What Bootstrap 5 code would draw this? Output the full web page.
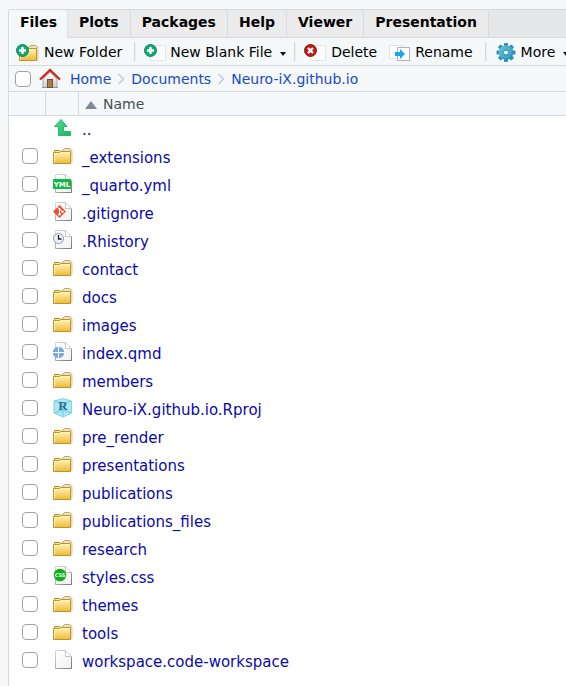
<!DOCTYPE html>
<html lang="en">
<head>
<meta charset="utf-8">
<meta name="viewport" content="width=device-width, initial-scale=1">
<title>Files</title>
<link href="https://cdn.jsdelivr.net/npm/bootstrap@5.3.0/dist/css/bootstrap.min.css" rel="stylesheet">
<style>
  :root { --line: #d6dadc; --pane: #f4f8f9; }
  body { background: #f6f7f9; font-family: "DejaVu Sans", sans-serif; font-size: 14px; line-height: 20px; color: #000; padding-top: 9px; overflow-x: hidden; }
  .pane { border: 1px solid var(--line); border-right: 0; border-bottom: 0; border-top-left-radius: 4px; background: #fff; min-height: calc(100vh - 9px); }
  .pane-tabs { background: #e6e7e8; border-top-left-radius: 3px; border: 0; }
  .pane-tabs .nav-item { margin: 0; }
  .pane-tabs .nav-link { margin: 0; padding: 2px 11px 5px; border: 0; border-right: 1px solid var(--line); border-bottom: 1px solid var(--line); border-radius: 0 4px 0 0; background: #ebebec; color: #000; font-weight: bold; line-height: 21px; height: 28px; }
  .pane-tabs .nav-link.active { padding-right: 10px; background: var(--pane); border-bottom-color: var(--pane); color: #000; border-radius: 3px 4px 0 0; }
  .pane-tabs .filler { border-bottom: 1px solid var(--line); }
  .bar { background: var(--pane); border-bottom: 1px solid var(--line); white-space: nowrap; overflow: hidden; }
  .tools { height: 28px; padding-left: 7px; }
  .crumbs { height: 26px; padding-left: 6px; }
  .tool { border: 0; background: none; padding: 0; color: #000; display: flex; align-items: center; flex-shrink: 0; }
  .tool svg, .crumbs svg { flex-shrink: 0; }
  .tool .tri { border: 3px solid transparent; border-top: 4px solid #111; border-bottom: 0; margin: 5px 0 0 8px; }
  .rule { width: 2px; height: 19px; margin: 0 8px 0 12px; background: #d3d7da; border-right: 1px solid #eceff0; flex-shrink: 0; }
  .tri-rule { margin-left: 8px; }
  .tool-next { margin-left: 12px; }
  .crumbs a { color: #1c49c4; text-decoration: none; }
  .crumbs .sep { margin: 0 7px; }
  .crumbs .house { margin: 0 9px 0 8px; }
  .tick { appearance: none; display: block; width: 16px; height: 16px; margin: 0; border: 1px solid #a2a2a2; border-radius: 4px; background: #fff; flex-shrink: 0; }
  .tick:checked { background: #3a7bd5; }
  .files { table-layout: fixed; width: 100%; border-collapse: separate; border-spacing: 0; }
  .files .c-tick { width: 37px; }
  .files .c-icon { width: 33px; }
  .files th { height: 24px; padding: 0; background: var(--pane); border-bottom: 1px solid var(--line); border-right: 1px solid var(--line); font-weight: normal; color: #494f56; line-height: 22px; }
  .files th:last-child { border-right: 0; padding-left: 6px; }
  .files th svg { margin-right: 6px; }
  .files td { height: 28px; padding: 0; font-size: 15px; line-height: 28px; vertical-align: top; }
  .files td:nth-child(1) { padding: 4px 0 0 13px; }
  .files td:nth-child(2) { padding: 2px 0 0 7px; }
  .files td:nth-child(3) { padding-left: 3px; }
  .files td svg { display: block; }
  .files td a { color: #0a0aa8; text-decoration: none; }
  .files a:hover, .crumbs a:hover { text-decoration: underline; }
</style>
<script src="https://cdn.jsdelivr.net/npm/bootstrap@5.3.0/dist/js/bootstrap.bundle.min.js"></script>
</head>
<body>
<svg width="0" height="0" class="position-absolute" aria-hidden="true">
  <defs>
    <linearGradient id="gold" x1="0" y1="0" x2="0" y2="1"><stop offset="0" stop-color="#fff5b5"/><stop offset=".5" stop-color="#f5d873"/><stop offset="1" stop-color="#efb93c"/></linearGradient>
    <linearGradient id="green" x1="0" y1="0" x2="1" y2="1"><stop offset="0" stop-color="#54dc95"/><stop offset="1" stop-color="#16b861"/></linearGradient>
    <linearGradient id="sheet" x1="0" y1="0" x2="1" y2="1"><stop offset="0" stop-color="#fff"/><stop offset="1" stop-color="#f1f1f1"/></linearGradient>
    <linearGradient id="edge" x1="0" y1="0" x2="1" y2="1"><stop offset="0" stop-color="#ddd"/><stop offset="1" stop-color="#777"/></linearGradient>
    <linearGradient id="blue" x1="0" y1="0" x2="1" y2="1"><stop offset="0" stop-color="#6ac9e6"/><stop offset="1" stop-color="#1e86ad"/></linearGradient>
    <linearGradient id="wall" x1="0" y1="0" x2="0" y2="1"><stop offset="0" stop-color="#fff"/><stop offset="1" stop-color="#c9cdd4"/></linearGradient>
  </defs>
  <symbol id="i-folder" viewBox="0 0 20 20">
    <path d="M9 5.500L11 2.500H17L19 4.500V16.500L17 17.500H9Z" fill="#e4e2dc" stroke="#dfcf98"/>
    <path d="M9 5L11.500 2.500H16.500L18.500 4.500" fill="none" stroke="#cdab43"/>
    <path d="M1.500 7V4.500H7L8.500 6.500H17.500" fill="#f6e6a0" stroke="#b9921d"/>
    <path d="M.5 6.500H6.500L8 5.500H17.500V17.500H.5Z" fill="url(#gold)" stroke="#bd942a"/>
    <path d="M1.500 16.500V7.500H7L8.500 6.500H16.500" fill="none" stroke="#fff5bd"/>
  </symbol>
  <symbol id="i-page" viewBox="0 0 20 20">
    <path d="M2.500 .5H12.500L18.500 6.500V18.500H2.500Z" fill="url(#sheet)" stroke="url(#edge)"/>
    <path d="M12.500 .5V6.500H18.500" fill="#fff" stroke="#c6c6c6"/>
  </symbol>
  <symbol id="i-up" viewBox="0 0 20 20">
    <path d="M8 1.500L14 8.500H10.500V13.500H17.500V17.500H5.500V8.500H1.500Z" fill="url(#green)" stroke="#27b96c"/>
  </symbol>
  <symbol id="i-git" viewBox="0 0 20 20">
    <use href="#i-page"/><path d="M6.500 3L13 9.500L6.500 16L0 9.500Z" fill="#f05133"/>
    <path d="M4.500 5L6.500 7V12M6.500 7L9.500 9.800" stroke="#fff" stroke-width="1" fill="none"/><circle cx="6.500" cy="7" r="1.100" fill="#fff"/><circle cx="6.500" cy="12.300" r="1.300" fill="#fff"/><circle cx="9.500" cy="9.700" r="1.200" fill="#fff"/>
  </symbol>
  <symbol id="i-clock" viewBox="0 0 20 20">
    <use href="#i-page"/><circle cx="5.500" cy="8.500" r="5" fill="#edf2fa" stroke="#8d97a8"/><path d="M5.500 5V9H8.500" fill="none" stroke="#222" stroke-width="1.300"/>
  </symbol>
  <symbol id="i-quarto" viewBox="0 0 20 20">
    <use href="#i-page"/><circle cx="5.500" cy="10.500" r="5.700" fill="#75aadb"/><path d="M5.500 4V17M-1 10.500H12" stroke="#fff"/>
  </symbol>
  <symbol id="i-plus" viewBox="0 0 14 14">
    <circle cx="6.500" cy="6.500" r="6" fill="#12a873" stroke="#0a8b60"/><path d="M6.500 3V10M3 6.500H10" stroke="#fff" stroke-width="2.400"/>
  </symbol>
</svg>

<main class="pane ms-2">
  <ul class="nav nav-tabs pane-tabs flex-nowrap" role="tablist">
    <li class="nav-item" role="presentation"><button class="nav-link active" type="button" role="tab" aria-selected="true">Files</button></li>
    <li class="nav-item" role="presentation"><button class="nav-link" type="button" role="tab">Plots</button></li>
    <li class="nav-item" role="presentation"><button class="nav-link" type="button" role="tab">Packages</button></li>
    <li class="nav-item" role="presentation"><button class="nav-link" type="button" role="tab">Help</button></li>
    <li class="nav-item" role="presentation"><button class="nav-link" type="button" role="tab">Viewer</button></li>
    <li class="nav-item" role="presentation"><button class="nav-link" type="button" role="tab">Presentation</button></li>
    <li class="filler flex-grow-1" role="presentation"></li>
  </ul>

  <div class="bar tools d-flex align-items-center" role="toolbar" aria-label="File actions">
    <button class="tool" type="button"><svg class="me-1" width="24" height="20" viewBox="0 0 24 20" aria-hidden="true"><use href="#i-folder" x="3" y="1" width="20" height="20"/><use href="#i-plus" x="0" y="2" width="14" height="14"/></svg>New Folder</button>
    <span class="rule"></span>
    <button class="tool" type="button"><svg class="me-1" width="22" height="20" viewBox="0 0 22 20" aria-hidden="true"><rect x="6.500" y="3.500" width="15" height="15" fill="#fff" stroke="#e3e5e6"/><use href="#i-plus" x="0" y="2" width="14" height="14"/></svg>New Blank File<span class="tri"></span></button>
    <span class="rule tri-rule"></span>
    <button class="tool" type="button"><svg class="me-1" width="23" height="20" viewBox="0 0 23 20" aria-hidden="true"><rect x="6.500" y="3.500" width="15" height="15" fill="#fff" stroke="#e3e5e6"/><circle cx="6.500" cy="8.500" r="6" fill="#b81f1a" stroke="#991611"/><path d="M4 6L9 11M9 6L4 11" stroke="#fff" stroke-width="2.200"/></svg>Delete</button>
    <button class="tool tool-next" type="button"><svg class="me-1" width="22" height="20" viewBox="0 0 22 20" aria-hidden="true"><rect x=".5" y="3.500" width="13" height="13" fill="#fff" stroke="#e0e2e4"/><rect x="8.500" y="5.500" width="12" height="13" fill="#fff" stroke="#aeb4bb"/><path d="M6 10H11V7L16 12L11 17V14H6Z" fill="#12a9ee"/></svg>Rename</button>
    <span class="rule"></span>
    <button class="tool" type="button"><svg class="me-1" width="22" height="20" viewBox="0 0 22 20" aria-hidden="true"><g transform="translate(11 10.500)"><g fill="#2c8fb4"><g id="teeth"><rect x="-2" y="-9.500" width="4" height="19" rx="1"/><rect x="-9.500" y="-2" width="19" height="4" rx="1"/></g><use href="#teeth" transform="rotate(45)"/></g><circle r="7.300" fill="url(#blue)"/><circle r="4.500" fill="none" stroke="#58b8d6"/><circle r="2.500" fill="#f4f8f9" stroke="#3389a8"/></g></svg>More<span class="tri"></span></button>
  </div>

  <nav class="bar crumbs d-flex align-items-center" aria-label="Current folder">
    <input class="tick" type="checkbox" aria-label="Select all">
    <svg class="house" width="22" height="22" viewBox="0 0 22 22" aria-hidden="true"><path d="M4 11L11 4L18 11V19.500H4Z" fill="url(#wall)" stroke="#a5abb4"/><path d="M3 19.500H19" stroke="#8f959e"/><rect x="8.500" y="11.500" width="5" height="8" fill="#ad7b4c" stroke="#76512e"/><path d="M1 11.500L11 2L21 11.500" fill="none" stroke="#c82410" stroke-width="2.200"/></svg>
    <a href="#">Home</a>
    <svg class="sep" width="6" height="12" viewBox="0 0 6 12" aria-hidden="true"><path d="M.5 1L5.500 6L.5 11" fill="none" stroke="#bfc6cd" stroke-width="1.300"/></svg>
    <a href="#">Documents</a>
    <svg class="sep" width="6" height="12" viewBox="0 0 6 12" aria-hidden="true"><path d="M.5 1L5.500 6L.5 11" fill="none" stroke="#bfc6cd" stroke-width="1.300"/></svg>
    <a href="#">Neuro-iX.github.io</a>
  </nav>

  <table class="files">
    <colgroup><col class="c-tick"><col class="c-icon"><col></colgroup>
    <thead><tr><th></th><th></th><th scope="col"><svg width="12" height="8" viewBox="0 0 12 8" aria-hidden="true"><path d="M6 0L12 8H0Z" fill="#7e8a9a"/></svg>Name</th></tr></thead>
    <tbody>
      <tr><td></td><td><svg width="20" height="20"><use href="#i-up"/></svg></td><td><a href="#">..</a></td></tr>
      <tr><td><input class="tick" type="checkbox" aria-labelledby="f1"></td><td><svg width="20" height="20"><use href="#i-folder"/></svg></td><td><a id="f1" href="#">_extensions</a></td></tr>
      <tr><td><input class="tick" type="checkbox" aria-labelledby="f2"></td><td><svg width="20" height="20" viewBox="0 0 20 20"><use href="#i-page"/><rect x="0" y="5" width="18" height="10" rx="1" fill="#10b944"/><text x="9" y="13" text-anchor="middle" font-family="DejaVu Sans, sans-serif" font-size="7" font-weight="bold" fill="#fff">YML</text></svg></td><td><a id="f2" href="#">_quarto.yml</a></td></tr>
      <tr><td><input class="tick" type="checkbox" aria-labelledby="f3"></td><td><svg width="20" height="20"><use href="#i-git"/></svg></td><td><a id="f3" href="#">.gitignore</a></td></tr>
      <tr><td><input class="tick" type="checkbox" aria-labelledby="f4"></td><td><svg width="20" height="20"><use href="#i-clock"/></svg></td><td><a id="f4" href="#">.Rhistory</a></td></tr>
      <tr><td><input class="tick" type="checkbox" aria-labelledby="f5"></td><td><svg width="20" height="20"><use href="#i-folder"/></svg></td><td><a id="f5" href="#">contact</a></td></tr>
      <tr><td><input class="tick" type="checkbox" aria-labelledby="f6"></td><td><svg width="20" height="20"><use href="#i-folder"/></svg></td><td><a id="f6" href="#">docs</a></td></tr>
      <tr><td><input class="tick" type="checkbox" aria-labelledby="f7"></td><td><svg width="20" height="20"><use href="#i-folder"/></svg></td><td><a id="f7" href="#">images</a></td></tr>
      <tr><td><input class="tick" type="checkbox" aria-labelledby="f8"></td><td><svg width="20" height="20"><use href="#i-quarto"/></svg></td><td><a id="f8" href="#">index.qmd</a></td></tr>
      <tr><td><input class="tick" type="checkbox" aria-labelledby="f9"></td><td><svg width="20" height="20"><use href="#i-folder"/></svg></td><td><a id="f9" href="#">members</a></td></tr>
      <tr><td><input class="tick" type="checkbox" aria-labelledby="f10"></td><td><svg width="20" height="20" viewBox="0 0 20 20"><path d="M1 3L10 .5L18.500 3V15L10 19L1 15Z" fill="#aee6f4"/><path d="M1 3L10 5L18.500 3M10 5V19M1 15L10 12L18.500 15" fill="none" stroke="#6fcbe2"/><path d="M1 3L10 .5L18.500 3V15L10 19L1 15Z" fill="none" stroke="#80d4e8"/><text x="10" y="12" text-anchor="middle" font-family="Liberation Serif, serif" font-size="13" font-weight="bold" fill="#2b6c8c">R</text></svg></td><td><a id="f10" href="#">Neuro-iX.github.io.Rproj</a></td></tr>
      <tr><td><input class="tick" type="checkbox" aria-labelledby="f11"></td><td><svg width="20" height="20"><use href="#i-folder"/></svg></td><td><a id="f11" href="#">pre_render</a></td></tr>
      <tr><td><input class="tick" type="checkbox" aria-labelledby="f12"></td><td><svg width="20" height="20"><use href="#i-folder"/></svg></td><td><a id="f12" href="#">presentations</a></td></tr>
      <tr><td><input class="tick" type="checkbox" aria-labelledby="f13"></td><td><svg width="20" height="20"><use href="#i-folder"/></svg></td><td><a id="f13" href="#">publications</a></td></tr>
      <tr><td><input class="tick" type="checkbox" aria-labelledby="f14"></td><td><svg width="20" height="20"><use href="#i-folder"/></svg></td><td><a id="f14" href="#">publications_files</a></td></tr>
      <tr><td><input class="tick" type="checkbox" aria-labelledby="f15"></td><td><svg width="20" height="20"><use href="#i-folder"/></svg></td><td><a id="f15" href="#">research</a></td></tr>
      <tr><td><input class="tick" type="checkbox" aria-labelledby="f16"></td><td><svg width="20" height="20" viewBox="0 0 20 20"><use href="#i-page"/><circle cx="7" cy="9" r="6.300" fill="#0fb01c"/><text x="7" y="11" text-anchor="middle" font-family="DejaVu Sans, sans-serif" font-size="5" font-weight="bold" fill="#fff">CSS</text></svg></td><td><a id="f16" href="#">styles.css</a></td></tr>
      <tr><td><input class="tick" type="checkbox" aria-labelledby="f17"></td><td><svg width="20" height="20"><use href="#i-folder"/></svg></td><td><a id="f17" href="#">themes</a></td></tr>
      <tr><td><input class="tick" type="checkbox" aria-labelledby="f18"></td><td><svg width="20" height="20"><use href="#i-folder"/></svg></td><td><a id="f18" href="#">tools</a></td></tr>
      <tr><td><input class="tick" type="checkbox" aria-labelledby="f19"></td><td><svg width="20" height="20"><use href="#i-page"/></svg></td><td><a id="f19" href="#">workspace.code-workspace</a></td></tr>
    </tbody>
  </table>
</main>
</body>
</html>
